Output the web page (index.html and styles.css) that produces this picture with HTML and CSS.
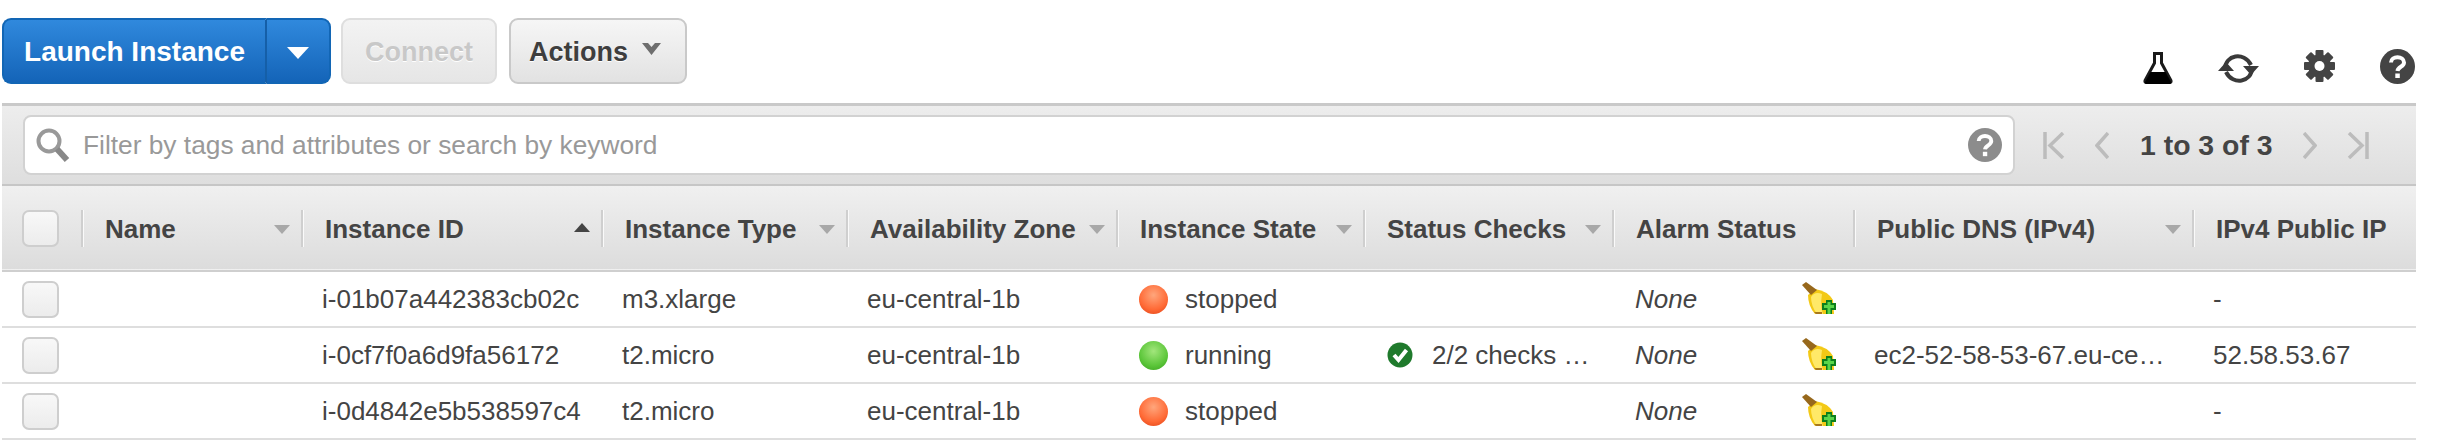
FILE: index.html
```html
<!DOCTYPE html>
<html lang="en">

<head>
    <meta charset="UTF-8">
    <title>EC2 Instances</title>
    <link rel="stylesheet" href="styles.css">
</head>

<body>
    <svg class="defs" width="0" height="0">
        <defs>
            <symbol id="broom" viewBox="0 0 34 32">
                <path d="M6 13 L13 7 Q26 9 31 18 L32 32 L13 32 Q6 24 6 13 Z" fill="#f3c916"/>
                <path d="M9 15 Q13 9 20 12 Q18 24 21 32 L15 32 Q9 24 9 15 Z" fill="#ffe968"/>
                <path d="M12 30 L20 30 L20 32 L14 32 Z" fill="#a8781c"/>
                <path d="M0 3 L4 0 L15 8 L9 13 Z" fill="#97681c"/>
                <path d="M24 18 H30 V21 H34 V28 H30 V32 H24 V28 H20 V21 H24 Z" fill="#0c7f1c"/>
                <path d="M25.500 20 H28.500 V23 H32 V26 H28.500 V32 H25.500 V26 H22 V23 H25.500 Z" fill="#5ad64a"/>
            </symbol>
        </defs>
    </svg>

    <div class="toolbar">
        <div class="launch-group">
            <button class="btn-launch">Launch Instance</button>
            <button class="btn-launch-arrow"><span class="white-arrow"></span></button>
        </div>
        <button class="btn btn-connect">Connect</button>
        <button class="btn btn-actions">Actions
            <svg class="chevron" width="19" height="12" viewBox="0 0 19 12">
                <path d="M0 0 H6 L9.500 4 L13 0 H19 L9.500 12 Z" fill="#6e6e6e"/>
            </svg>
        </button>
        <div class="tool-icons">
            <svg width="30" height="32" viewBox="0 0 30 32">
                <path d="M10 1.500 H20 M11.500 2 V11 L2 28.500 Q1.500 30.500 3.500 30.500 H26.500 Q28.500 30.500 28 28.500 L18.500 11 V2" fill="none" stroke="#1a1a1a" stroke-width="3"/>
                <path d="M7.500 20 H22.500 L28 30 Q28.500 32 26 32 H4 Q1.500 32 2 30 Z" fill="#000"/>
            </svg>
            <svg class="icon-sync" width="41" height="33" viewBox="0 0 41 33">
                <path d="M7 17 C7 3 26 -1 33 13" fill="none" stroke="#3a3a3a" stroke-width="4"/>
                <path d="M34 16 C34 30 15 34 8 20" fill="none" stroke="#3a3a3a" stroke-width="4"/>
                <path d="M25 14 H41 L33 23 Z M0 19 H16 L8 10 Z" fill="#3a3a3a"/>
            </svg>
            <svg class="icon-gear" width="31" height="32" viewBox="0 0 31 32">
                <g fill="#444">
                    <circle cx="15.500" cy="16" r="11.500"/>
                    <rect x="11.500" y="0" width="8" height="32" rx="1"/>
                    <rect x="0" y="12" width="31" height="8" rx="1"/>
                    <rect x="11.500" y="0" width="8" height="32" rx="1" transform="rotate(45 15.500 16)"/>
                    <rect x="11.500" y="0" width="8" height="32" rx="1" transform="rotate(-45 15.500 16)"/>
                </g>
                <circle cx="15.500" cy="16" r="5" fill="#fff"/>
            </svg>
            <svg class="icon-help" width="35" height="35" viewBox="0 0 35 35">
                <circle cx="17.500" cy="17.500" r="17.500" fill="#444"/>
                <path d="M11 13.500 C11 6.500 24 6.500 24 13.500 C24 18 18 17.500 17.500 22" fill="none" stroke="#fff" stroke-width="4"/>
                <rect x="15.300" y="24.500" width="4.500" height="4.500" fill="#fff"/>
            </svg>
        </div>
    </div>

    <div class="filter-bar">
        <div class="search-box">
            <svg width="34" height="34" viewBox="0 0 34 34">
                <circle cx="13" cy="13" r="10.500" fill="none" stroke="#999" stroke-width="4"/>
                <path d="M21 21 L31 32" stroke="#888" stroke-width="6"/>
            </svg>
            <span class="placeholder">Filter by tags and attributes or search by keyword</span>
            <svg class="search-help" width="34" height="34" viewBox="0 0 35 35">
                <circle cx="17.500" cy="17.500" r="17.500" fill="#8c8c8c"/>
                <path d="M11 13.500 C11 6.500 24 6.500 24 13.500 C24 18 18 17.500 17.500 22" fill="none" stroke="#fff" stroke-width="4"/>
                <rect x="15.300" y="24.500" width="4.500" height="4.500" fill="#fff"/>
            </svg>
        </div>
        <div class="pager">
            <svg width="22" height="27" viewBox="0 0 22 27">
                <path d="M2 0 V27 M20 1 L7 13.500 L20 26" fill="none" stroke="#bcbcbc" stroke-width="3.500"/>
            </svg>
            <svg width="14" height="27" viewBox="0 0 14 27">
                <path d="M13 1 L2 13.500 L13 26" fill="none" stroke="#bcbcbc" stroke-width="3.500"/>
            </svg>
            <span class="pager-text">1 to 3 of 3</span>
            <svg width="14" height="27" viewBox="0 0 14 27">
                <path d="M1 1 L12 13.500 L1 26" fill="none" stroke="#bcbcbc" stroke-width="3.500"/>
            </svg>
            <svg width="22" height="27" viewBox="0 0 22 27">
                <path d="M20 0 V27 M2 1 L15 13.500 L2 26" fill="none" stroke="#bcbcbc" stroke-width="3.500"/>
            </svg>
        </div>
    </div>

    <table class="instances">
        <colgroup>
            <col class="col-check">
            <col class="col-name">
            <col class="col-id">
            <col class="col-type">
            <col class="col-zone">
            <col class="col-state">
            <col class="col-checks">
            <col class="col-alarm">
            <col class="col-dns">
            <col class="col-ip">
        </colgroup>
        <thead>
            <tr>
                <th><div class="checkbox"></div></th>
                <th><div class="th-inner">Name<span class="sort"></span></div></th>
                <th><div class="th-inner">Instance ID<span class="sort sort-up"></span></div></th>
                <th><div class="th-inner">Instance Type<span class="sort"></span></div></th>
                <th><div class="th-inner">Availability Zone<span class="sort"></span></div></th>
                <th><div class="th-inner">Instance State<span class="sort"></span></div></th>
                <th><div class="th-inner">Status Checks<span class="sort"></span></div></th>
                <th><div class="th-inner">Alarm Status</div></th>
                <th><div class="th-inner">Public DNS (IPv4)<span class="sort"></span></div></th>
                <th><div class="th-inner">IPv4 Public IP</div></th>
            </tr>
        </thead>
        <tbody>
            <tr>
                <td><div class="checkbox"></div></td>
                <td></td>
                <td>i-01b07a442383cb02c</td>
                <td>m3.xlarge</td>
                <td>eu-central-1b</td>
                <td><div class="state"><span class="dot dot-red"></span>stopped</div></td>
                <td></td>
                <td><div class="alarm"><em>None</em><svg class="broom" width="34" height="32"><use href="#broom"/></svg></div></td>
                <td></td>
                <td>-</td>
            </tr>
            <tr>
                <td><div class="checkbox"></div></td>
                <td></td>
                <td>i-0cf7f0a6d9fa56172</td>
                <td>t2.micro</td>
                <td>eu-central-1b</td>
                <td><div class="state"><span class="dot dot-green"></span>running</div></td>
                <td>
                    <div class="checks">
                        <svg width="26" height="26" viewBox="0 0 26 26">
                            <circle cx="13" cy="13" r="12.500" fill="#1f7a2c"/>
                            <path d="M7 13 L11.500 18 L19.500 8" fill="none" stroke="#fff" stroke-width="4"/>
                        </svg>
                        2/2 checks &hellip;
                    </div>
                </td>
                <td><div class="alarm"><em>None</em><svg class="broom" width="34" height="32"><use href="#broom"/></svg></div></td>
                <td>ec2-52-58-53-67.eu-ce&hellip;</td>
                <td>52.58.53.67</td>
            </tr>
            <tr>
                <td><div class="checkbox"></div></td>
                <td></td>
                <td>i-0d4842e5b538597c4</td>
                <td>t2.micro</td>
                <td>eu-central-1b</td>
                <td><div class="state"><span class="dot dot-red"></span>stopped</div></td>
                <td></td>
                <td><div class="alarm"><em>None</em><svg class="broom" width="34" height="32"><use href="#broom"/></svg></div></td>
                <td></td>
                <td>-</td>
            </tr>
        </tbody>
    </table>
</body>

</html>
```

FILE: styles.css
```css
body {
    margin: 0;
    padding: 0 22px 0 2px;
    background-color: #fff;
    font-family: 'Liberation Sans', Arial, sans-serif;
    color: #444;
    overflow: hidden;
}

.defs {
    display: block;
}

button {
    font-family: inherit;
}

.toolbar {
    display: flex;
    align-items: flex-start;
    height: 103px;
    padding-top: 18px;
    box-sizing: border-box;
}

.launch-group {
    display: flex;
    height: 66px;
    margin-right: 10px;
}

.btn-launch,
.btn-launch-arrow {
    height: 66px;
    border: 2px solid #1266b5;
    background: linear-gradient(#3089dd, #1464b8);
    color: #fff;
    font-size: 28px;
    font-weight: 700;
    padding: 2px 0 0;
}

.btn-launch {
    width: 265px;
    border-radius: 9px 0 0 9px;
    border-right: 2px solid #155fa8;
}

.btn-launch-arrow {
    width: 64px;
    border-left: 0;
    border-radius: 0 9px 9px 0;
    display: flex;
    align-items: center;
    justify-content: center;
}

.white-arrow {
    width: 0;
    height: 0;
    border-left: 11px solid transparent;
    border-right: 11px solid transparent;
    border-top: 12px solid #fff;
    margin-top: 2px;
}

.btn {
    display: flex;
    align-items: center;
    justify-content: center;
    height: 66px;
    border-radius: 9px;
    font-size: 27px;
    font-weight: 700;
    padding: 2px 0 0;
}

.btn-connect {
    width: 156px;
    margin-right: 12px;
    border: 2px solid #dedede;
    background: linear-gradient(#f3f3f3, #e6e6e6);
    color: #c8c8c8;
    text-shadow: 0 1px 0 #fff;
}

.btn-actions {
    width: 178px;
    gap: 14px;
    padding-right: 6px;
    border: 2px solid #c9c9c9;
    background: linear-gradient(#f6f6f6, #e2e2e2);
    color: #3e3e3e;
    text-shadow: 0 1px 0 #fff;
}

.chevron {
    margin-top: -6px;
}

.tool-icons {
    display: flex;
    gap: 45px;
    margin-left: auto;
    margin-top: 34px;
    margin-right: 1px;
}

.icon-gear {
    margin-top: -2px;
}

.icon-help {
    margin-top: -3px;
}

.filter-bar {
    display: flex;
    align-items: center;
    height: 83px;
    box-sizing: border-box;
    padding-left: 21px;
    border-top: 3px solid #c9c9c9;
    border-bottom: 2px solid #c6c6c6;
    background: linear-gradient(#ededed, #dedede);
}

.search-box {
    flex: 1;
    display: flex;
    align-items: center;
    height: 60px;
    box-sizing: border-box;
    padding: 0 11px;
    border: 2px solid #d2d2d2;
    border-radius: 8px;
    background-color: #fff;
}

.placeholder {
    margin-left: 13px;
    font-size: 26.300px;
    color: #999;
}

.search-help {
    margin-left: auto;
}

.pager {
    display: flex;
    align-items: center;
    gap: 30px;
    width: 401px;
    box-sizing: border-box;
    padding-left: 28px;
}

.pager-text {
    width: 134px;
    margin-left: 1px;
    margin-right: -1px;
    font-size: 28.400px;
    font-weight: 700;
    color: #444;
    white-space: nowrap;
}

.instances {
    width: 2414px;
    table-layout: fixed;
    border-collapse: collapse;
    font-size: 26px;
}

.col-check { width: 80px; }
.col-name { width: 220px; }
.col-id { width: 300px; }
.col-type { width: 245px; }
.col-zone { width: 270px; }
.col-state { width: 247px; }
.col-checks { width: 249px; }
.col-alarm { width: 241px; }
.col-dns { width: 339px; }
.col-ip { width: 223px; }

.instances thead tr {
    height: 85px;
    background: linear-gradient(#f0f0f0, #dcdcdc);
    border-bottom: 2px solid #cfcfcf;
}

.instances th {
    padding: 0;
    text-align: left;
    font-size: 26px;
    font-weight: 700;
    color: #444;
}

.th-inner {
    display: flex;
    align-items: center;
    justify-content: space-between;
    height: 37px;
    margin: 0 0 0 -1px;
    padding: 2px 12px 0 22px;
    box-sizing: border-box;
    border-left: 2px solid #cfcfcf;
    box-shadow: inset 1px 0 0 #fafafa;
    white-space: nowrap;
}

.sort {
    width: 0;
    height: 0;
    border-left: 8px solid transparent;
    border-right: 8px solid transparent;
    border-top: 9px solid #a8a8a8;
}

.sort-up {
    border-top: 0;
    border-bottom: 9px solid #444;
    margin-top: -4px;
}

.instances tbody tr {
    height: 56px;
    border-bottom: 2px solid #dedede;
}

.instances td {
    padding: 0 0 0 20px;
    box-sizing: border-box;
    white-space: nowrap;
}

.instances td:first-child {
    padding: 0;
}

.checkbox {
    width: 37px;
    height: 37px;
    margin-left: 20px;
    box-sizing: border-box;
    border: 2px solid #cecece;
    border-radius: 7px;
    background: linear-gradient(#f8f8f8, #ececec);
}

.state,
.checks {
    display: flex;
    align-items: center;
}

.state {
    margin-left: 2px;
}

.checks {
    margin-left: 3px;
    gap: 19px;
}

.dot {
    width: 29px;
    height: 29px;
    border-radius: 50%;
    margin-right: 17px;
}

.dot-red {
    background: radial-gradient(circle at 50% 35%, #ffa67c, #ff6a36 60%, #dd3e12);
}

.dot-green {
    background: radial-gradient(circle at 50% 35%, #a2e67c, #5cc63a 60%, #35a01c);
}

.alarm {
    display: flex;
    align-items: center;
    justify-content: space-between;
    padding: 0 18px 0 2px;
}

.broom {
    margin-top: -2px;
}
```
